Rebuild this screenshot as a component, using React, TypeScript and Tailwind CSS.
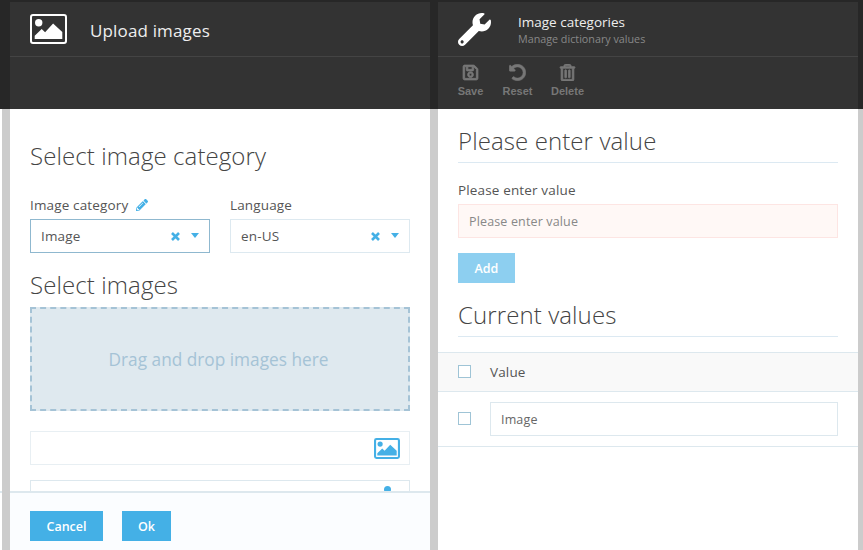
import { FaPencilAlt, FaRegSave, FaRegTrashAlt, FaUndoAlt, FaWrench } from "react-icons/fa";

const font = "font-['Open_Sans','Noto_Sans',sans-serif]";

const PictureIcon = ({ className, border = 2 }: { className: string; border?: number }) => (
  <svg viewBox="0 0 37 30" className={className} fill="currentColor" preserveAspectRatio="none">
    <rect x={border / 2} y={border / 2} width={37 - border} height={30 - border} rx="2" fill="none" stroke="currentColor" strokeWidth={border} />
    <circle cx="8.7" cy="8.7" r="3.7" />
    <path d="M4.7 25v-3.2l7-6.8 3.4 3.2 8-8.7 9.2 8.6V25z" />
  </svg>
);

const Heading = ({ children }: { children: string }) => (
  <h2 className="h-[34px] text-[24px] leading-[32px] font-light tracking-[0.1px] text-[#444]">{children}</h2>
);

const Label = ({ children }: { children: React.ReactNode }) => (
  <label className="flex h-[20px] items-center text-[13.5px] tracking-[0.15px] text-[#555]">{children}</label>
);

const Picker = ({ value, active }: { value: string; active?: boolean }) => (
  <div className={`flex h-[34px] items-center border pl-[10px] pr-[10px] text-[13.5px] tracking-[0.15px] text-[#555] ${active ? "border-[#8fb8cf]" : "border-[#dde9f0]"}`}>
    <span className="flex-1">{value}</span>
    <svg viewBox="0 0 9 9" className="h-[9px] w-[9px] text-[#44b0e6]" stroke="currentColor" strokeWidth="2.6">
      <path d="M1 1l7 7M8 1l-7 7" />
    </svg>
    <svg viewBox="0 0 8 5" className="mb-[2px] ml-[11px] h-[5px] w-[8px] text-[#44b0e6]" fill="currentColor">
      <path d="M0 0h8L4 5z" />
    </svg>
  </div>
);

const Tool = ({ icon, label, className }: { icon: React.ReactNode; label: string; className: string }) => (
  <div className={`flex flex-col items-center text-[#777] ${className}`}>
    <div className="flex h-[16px] items-center text-[17px]">{icon}</div>
    <span className="mt-[4px] font-['Liberation_Sans',sans-serif] text-[11px] leading-[14px] font-bold">{label}</span>
  </div>
);

const Check = () => <span className="mb-[2px] block h-[13px] w-[13px] shrink-0 border border-[#9fc4d6] bg-white" />;

const Btn = ({ children, className }: { children: string; className: string }) => (
  <button className={`h-[30px] pt-[2px] text-[12.5px] font-semibold text-white ${className}`}>{children}</button>
);

export default function App() {
  return (
    <div className={`flex h-[550px] w-[863px] flex-col overflow-hidden bg-white ${font}`}>
      <div className="flex h-[109px] bg-[#272727] pt-[2px]">
        <header className="ml-[10px] h-full w-[420px] bg-[#333]">
          <div className="flex h-[55px] items-center border-b border-[#444] pl-[20px]">
            <PictureIcon className="h-[30px] w-[37px] text-white" />
            <span className="ml-[23px] mt-[4px] text-[17px] tracking-[0.15px] text-[#eee]">Upload images</span>
          </div>
        </header>
        <header className="ml-[8px] h-full w-[420px] bg-[#333]">
          <div className="flex h-[55px] items-center border-b border-[#444] pl-[20px]">
            <FaWrench className="h-[33px] w-[33px] text-white" />
            <div className="ml-[27px] mt-[2px] flex flex-col">
              <span className="text-[13.5px] leading-[18px] text-[#eee]">Image categories</span>
              <span className="mt-[1px] text-[10.75px] leading-[15px] text-[#888]">Manage dictionary values</span>
            </div>
          </div>
          <div className="flex pl-[20px] pt-[7px]">
            <Tool icon={<FaRegSave stroke="currentColor" strokeWidth={24} />} label="Save" className="w-[25px]" />
            <Tool icon={<FaUndoAlt stroke="currentColor" strokeWidth={16} />} label="Reset" className="ml-[20px] w-[29px]" />
            <Tool icon={<FaRegTrashAlt stroke="currentColor" strokeWidth={24} />} label="Delete" className="ml-[20px] w-[31px]" />
          </div>
        </header>
      </div>

      <div className="flex flex-1 overflow-hidden">
        <div className="flex w-[2px] flex-col">
          <div className="h-[382px]" />
          <div className="h-[2px] bg-[#dde8ee]" />
        </div>
        <div className="w-[8px] bg-[#ccc]" />

        <section className="flex w-[420px] flex-col">
          <div className="h-[382px] overflow-hidden px-[20px] pt-[31px]">
            <Heading>Select image category</Heading>
            <div className="mt-[21px] flex gap-[20px]">
              <div className="flex-1">
                <Label>
                  Image category
                  <FaPencilAlt className="ml-[8px] text-[12px] text-[#44b0e6]" />
                </Label>
                <div className="mt-[4px]">
                  <Picker value="Image" active />
                </div>
              </div>
              <div className="flex-1">
                <Label>Language</Label>
                <div className="mt-[4px]">
                  <Picker value="en-US" />
                </div>
              </div>
            </div>
            <div className="mt-[16px]">
              <Heading>Select images</Heading>
            </div>
            <div className="mt-[4px] flex h-[104px] items-center justify-center border-2 border-dashed border-[#a5c3d6] bg-[#dfe9ef] pr-[3px] pt-[2px] text-[17.25px] font-medium text-[#a5c3d6]">
              Drag and drop images here
            </div>
            <div className="mt-[20px] flex h-[34px] items-center justify-end border border-[#e8eff3] pr-[9px]">
              <PictureIcon border={3} className="h-[21px] w-[26px] text-[#44b0e6]" />
            </div>
            <div className="mt-[15px] flex h-[34px] items-start justify-end border border-[#dde8ee] pr-[18px] pt-[5px]">
              <span className="block h-[7px] w-[7px] rounded-full bg-[#44b0e6]" />
            </div>
          </div>
          <footer className="flex flex-1 gap-[19px] border-t-2 border-[#dde8ee] bg-[#fbfdff] pl-[20px] pt-[18px]">
            <Btn className="w-[73px] bg-[#44b0e6]">Cancel</Btn>
            <Btn className="w-[49px] bg-[#44b0e6]">Ok</Btn>
          </footer>
        </section>

        <div className="w-[8px] bg-[#ccc]" />

        <section className="w-[420px] pt-[16px]">
          <div className="mx-[20px] border-b border-[#dce9f2] pb-[3px]">
            <Heading>Please enter value</Heading>
          </div>
          <div className="mx-[20px] pt-[17px]">
            <Label>Please enter value</Label>
            <div className="mt-[4px] flex h-[34px] items-center border border-[#fde5e3] bg-[#fff8f6] pl-[10px] pt-[2px] text-[12.5px] tracking-[0.15px] text-[#888]">
              Please enter value
            </div>
            <Btn className="mt-[15px] block w-[57px] bg-[#8dcff0]">Add</Btn>
          </div>
          <div className="mx-[20px] mt-[16px] border-b border-[#dce9f2] pb-[3px]">
            <Heading>Current values</Heading>
          </div>
          <div className="mt-[15px] flex h-[40px] items-center border-y border-[#dde8ee] bg-[#f9f9f9] pl-[20px]">
            <Check />
            <span className="ml-[19px] text-[13.5px] tracking-[0.15px] text-[#555]">Value</span>
          </div>
          <div className="flex items-center border-b border-[#dde8ee] py-[10px] pl-[20px] pr-[20px]">
            <Check />
            <div className="ml-[19px] flex h-[34px] flex-1 items-center border border-[#dde8ee] pl-[10px] pt-[2px] text-[12.5px] tracking-[0.15px] text-[#666]">
              Image
            </div>
          </div>
        </section>

        <div className="flex-1 bg-[#ccc]" />
      </div>
    </div>
  );
}
